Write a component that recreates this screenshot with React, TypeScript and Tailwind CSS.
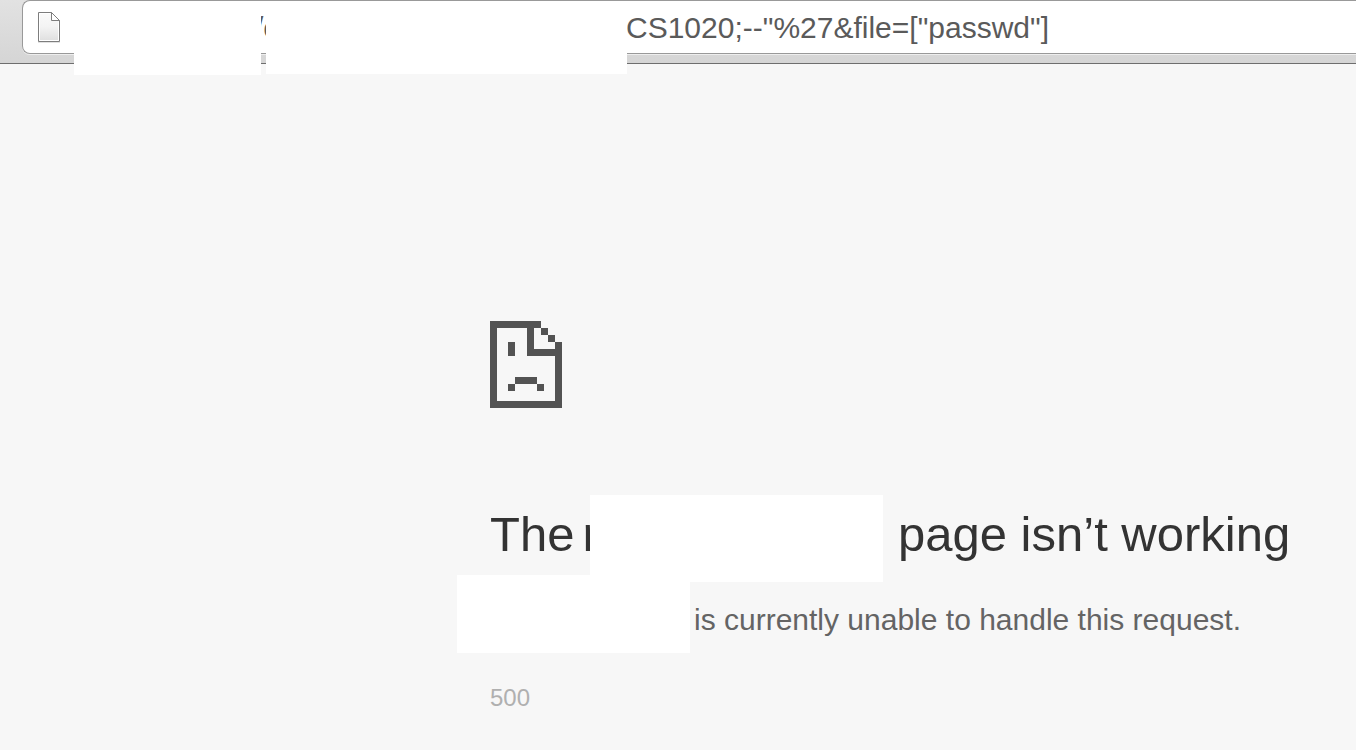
import { useState } from "react";

function PageIcon() {
  return (
    <svg width="26" height="34" viewBox="0 0 26 34" className="shrink-0" aria-hidden="true">
      <defs>
        <linearGradient id="sheet" x1="0" y1="0" x2="0" y2="1">
          <stop offset="0" stopColor="#fafafa" />
          <stop offset="0.5" stopColor="#f3f3f3" />
          <stop offset="1" stopColor="#dedede" />
        </linearGradient>
      </defs>
      <path d="M2 32.5H24" stroke="#e2e2e2" />
      <path d="M2.5 2.5H15.5L23.5 10.5V31.5H2.5Z" fill="url(#sheet)" stroke="#7d7d7d" />
      <path d="M3.5 30.5V3.5H14.5M22.5 11.5V30.5H3.5" fill="none" stroke="#fff" />
      <path d="M15.5 2.5V10.5H23.5Z" fill="#fff" stroke="#7d7d7d" />
    </svg>
  );
}

function SadPage() {
  return (
    <svg width="72" height="87" viewBox="0 0 72 87" fill="#535353" shapeRendering="crispEdges" aria-hidden="true">
      <path d="M0 0H51V7H44V28H65V21H72V87H0ZM7 7V80H65V35H37V7Z" fillRule="evenodd" />
      <path d="M51 7H58V14H51ZM58 14H65V21H58ZM18 21H25V35H18ZM25 56H47V63H25ZM18 63H25V70H18ZM47 63H54V70H47Z" />
    </svg>
  );
}

export default function App() {
  const [address, setAddress] = useState('CS1020;--"%27&file=["passwd"]');

  return (
    <div className="flex min-h-screen flex-col overflow-x-hidden bg-[#f7f7f7] font-['Liberation_Sans',Arial,sans-serif]">
      <header className="relative border-b border-[#6e6e6e] bg-linear-to-b from-[#e2e2e2] to-[#d5d5d5] pb-[9px] pl-[22px]">
        <div className="flex h-[54px] items-center rounded-l-lg border border-r-0 border-[#999] bg-white pl-[13px] shadow-[0_1px_0_#eeeeee]">
          <PageIcon />
          <span className="ml-[193px] w-[371px] shrink-0 pt-0.5 text-[30px] leading-9 text-[#5a5a5a]">/c</span>
          <input
            type="text"
            aria-label="Address"
            value={address}
            onChange={(e) => setAddress(e.target.value)}
            className="min-w-0 flex-1 bg-transparent pt-0.5 text-[30px] leading-9 text-[#5a5a5a] outline-none"
          />
        </div>
        <div className="absolute left-[74px] top-1 h-[71px] w-[187px] bg-white" />
        <div className="absolute left-[266px] top-1 h-[70px] w-[361px] bg-white" />
      </header>

      <main className="pl-[490px] pt-[257px]">
        <SadPage />
        <h1 className="relative mt-[97px] flex whitespace-nowrap text-[49px] leading-[58px] text-[#333]">
          <span className="flex w-[408px] shrink-0 gap-2">
            <span>The</span>
            <span>r</span>
          </span>
          <span>page isn’t working</span>
          <span className="absolute -top-[10px] left-[100px] h-[87px] w-[293px] bg-white" />
        </h1>
        <div className="relative mt-[39px] whitespace-nowrap pl-[204px] text-[30px] leading-9 text-[#646464]">
          <p>is currently unable to handle this request.</p>
          <span className="absolute -left-[33px] -top-[27px] h-[78px] w-[233px] bg-white" />
        </div>
        <p className="mt-11 text-2xl leading-8 text-[#b0b0b0]">500</p>
      </main>
    </div>
  );
}
